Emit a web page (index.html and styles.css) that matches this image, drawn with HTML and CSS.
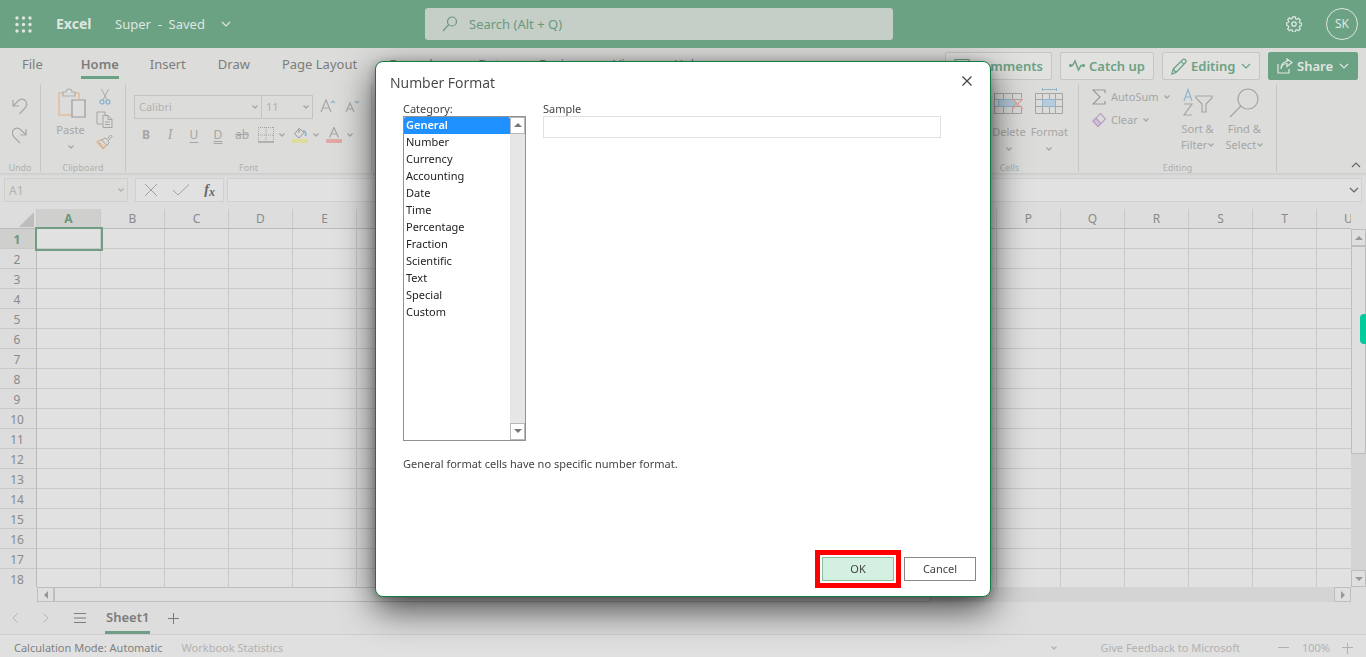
FILE: index.html
```html
<!DOCTYPE html>
<html lang="en">
<head>
<meta charset="utf-8">
<title>Super - Excel</title>
<link rel="stylesheet" href="styles.css">
</head>
<body>
<svg class="symbols" aria-hidden="true">
  <symbol id="chev" viewBox="0 0 10 6"><path d="M1 1l4 4 4-4" fill="none" stroke="currentColor" stroke-width="1.2"/></symbol>
  <symbol id="chev-s" viewBox="0 0 6 4"><path d="M.5.5L3 3 5.500.5" fill="none" stroke="currentColor" stroke-width="1.300"/></symbol>
  <symbol id="tri" viewBox="0 0 8 4"><path d="M4 0l4 4H0z" fill="currentColor"/></symbol>
</svg>

<header class="topbar">
  <button class="plain waffle" aria-label="App launcher">
    <svg width="17" height="17" viewBox="0 0 17 17" fill="currentColor"><circle cx="2" cy="2" r="1.700"/><circle cx="8.500" cy="2" r="1.700"/><circle cx="15" cy="2" r="1.700"/><circle cx="2" cy="8.500" r="1.700"/><circle cx="8.500" cy="8.500" r="1.700"/><circle cx="15" cy="8.500" r="1.700"/><circle cx="2" cy="15" r="1.700"/><circle cx="8.500" cy="15" r="1.700"/><circle cx="15" cy="15" r="1.700"/></svg>
  </button>
  <div class="brand">Excel</div>
  <button class="plain doc"><span>Super&nbsp; -&nbsp; Saved</span><svg width="10" height="6"><use href="#chev"/></svg></button>
  <label class="search">
    <svg width="16" height="16" viewBox="0 0 16 16" fill="none" stroke="currentColor" stroke-width="1.200"><circle cx="10" cy="5.500" r="4.500"/><path d="M6.700 8.700L1 15"/></svg>
    <input type="text" placeholder="Search (Alt + Q)" aria-label="Search">
  </label>
  <button class="plain gear" aria-label="Settings">
    <svg width="16" height="16" viewBox="0 0 18 18" fill="none" stroke="currentColor" stroke-width="1.400"><path d="M7.500 1h3l.4 2.100 1.400.6 1.800-1.200 2 2-1.200 1.800.6 1.400 2 .4v2.800l-2 .4-.6 1.400 1.200 1.800-2 2-1.800-1.200-1.400.6-.4 2.100h-3l-.4-2.100-1.400-.6-1.800 1.200-2-2 1.200-1.800-.6-1.400L.8 10.400V7.600l1.700-.3.600-1.400-1.200-1.800 2-2 1.800 1.200 1.400-.6z"/><circle cx="9" cy="9" r="2.500"/></svg>
  </button>
  <button class="plain avatar">SK</button>
</header>

<nav class="tabs">
  <button class="plain tab file">File</button>
  <button class="plain tab active">Home</button>
  <button class="plain tab">Insert</button>
  <button class="plain tab">Draw</button>
  <button class="plain tab">Page Layout</button>
  <button class="plain tab">Formulas</button>
  <button class="plain tab">Data</button>
  <button class="plain tab">Review</button>
  <button class="plain tab">View</button>
  <button class="plain tab">Help</button>
  <div class="actions">
    <button class="action comments"><svg width="16" height="16" viewBox="0 0 16 16" fill="none" stroke="currentColor" stroke-width="1.200"><path d="M1 1.500h14v10H7l-3 3v-3H1z"/></svg>Comments</button>
    <button class="action catch"><svg width="16" height="14" viewBox="0 0 16 14" fill="none" stroke="currentColor" stroke-width="1.500"><path d="M1.500 6.500h2L6 2l3.500 9L12 6.500h2.500"/><circle cx="1.500" cy="6.500" r=".8"/><circle cx="14.500" cy="6.500" r=".8"/></svg>Catch up</button>
    <button class="action edit"><svg width="16" height="17" viewBox="0 0 16 17" fill="none" stroke="currentColor" stroke-width="1.300"><path d="M1 16l1.200-4.800L11.500 1.900c1-1 2-1 2.900-.1s.9 1.900-.1 2.900L5 14.500zM10 3.400l3 3M2.200 11.200L5 14.500"/></svg>Editing<svg class="more" width="10" height="6"><use href="#chev"/></svg></button>
    <button class="action share"><svg width="16" height="16" viewBox="0 0 16 16" fill="none" stroke="currentColor" stroke-width="1.200"><path d="M1 6v9h11v-4M4 11c.5-4 3-5.500 6-5.500v3L15 4.500 10 1v2.500C6.500 4 4 6.500 4 11z"/></svg>Share<svg class="more" width="10" height="6"><use href="#chev"/></svg></button>
  </div>
</nav>

<section class="ribbon">
  <div class="group undo">
    <div class="tools column">
      <button class="plain" aria-label="Undo"><svg width="16" height="18" viewBox="0 0 16 18" fill="none" stroke="currentColor" stroke-width="1.200"><path d="M1 2v6h6M1 8l5-5c3-3 6.500-2 8 .5 1 2 .8 4.500-1 6.500L7.500 16"/></svg></button>
      <button class="plain" aria-label="Redo"><svg width="16" height="18" viewBox="0 0 16 18" fill="none" stroke="currentColor" stroke-width="1.200"><path d="M14 2v6H8M14 8L9 3C6 0 2.500 1 1 3.500 0 5.500.2 8 2 10l6 6"/></svg></button>
    </div>
    <div class="caption">Undo</div>
  </div>
  <div class="group clipboard">
    <div class="tools">
      <button class="plain big">
        <svg width="28" height="32" viewBox="0 0 28 32" fill="none" stroke-width="1.200"><path d="M5 5H1v22h12M17 5h4v6" stroke="#dfbd9c" stroke-width="1.500"/><path d="M5 8V4h3c0-4 6-4 6 0h3v4z" stroke="#b0b0b0"/><path d="M14 12h13v17H14z" stroke="#999" fill="#dedede"/></svg>
        <span>Paste</span><svg width="6" height="4"><use href="#chev-s"/></svg>
      </button>
      <div class="column clips">
        <button class="plain" aria-label="Cut"><svg width="12" height="17" viewBox="0 0 12 17" fill="none" stroke="#aaa"><path d="M2.500 1l5.500 11M9.500 1L4 12"/><g stroke="#91b5cc" stroke-width="1.300"><circle cx="3" cy="14" r="2"/><circle cx="9" cy="14" r="2"/></g></svg></button>
        <button class="plain" aria-label="Copy"><svg width="17" height="17" viewBox="0 0 17 17" fill="none" stroke="#a5a5a5"><path d="M6 13H1V1h8v3M7 4.500h5l4 4v8H7zM12 4.500v4h4M9 11h5M9 13.500h5"/></svg></button>
        <button class="plain" aria-label="Format painter"><svg width="17" height="16" viewBox="0 0 17 16" fill="none" stroke="#a5a5a5"><path d="M6 6l3-2 2 1.500L14.500 1l1.500 1.500L12 7l1 2-2 2.500-6-6z"/><path d="M5 6L1 8l6 6.500 3.500-3.500M3 9l2 1M6 11l1 1" stroke="#d9b08a" stroke-width="1.300"/></svg></button>
      </div>
    </div>
    <div class="caption">Clipboard</div>
  </div>
  <div class="group font">
    <div class="tools column">
      <div class="row combos">
        <span class="combo name"><select aria-label="Font"><option>Calibri</option></select><svg width="6" height="4"><use href="#chev-s"/></svg></span>
        <span class="combo size"><select aria-label="Font size"><option>11</option></select><svg width="6" height="4"><use href="#chev-s"/></svg></span>
        <button class="plain grow" aria-label="Grow font"><svg width="16" height="16" viewBox="0 0 16 16" fill="none" stroke="currentColor" stroke-width="1.200"><path d="M1 13L6 1l5 12M3 9h6"/><path d="M11 4l2-2 2 2" stroke="#91b5cc"/></svg></button>
        <button class="plain shrink" aria-label="Shrink font"><svg width="16" height="16" viewBox="0 0 16 16" fill="none" stroke="currentColor" stroke-width="1.200"><path d="M1 13L5 4l4 9M3 10h4"/><path d="M10 2l2 2 2-2" stroke="#91b5cc"/></svg></button>
      </div>
      <div class="row styles">
        <button class="plain b">B</button><button class="plain i">I</button><button class="plain u">U</button><button class="plain d">D</button><button class="plain s">ab</button>
        <button class="plain split" aria-label="Borders"><svg width="16" height="16" viewBox="0 0 16 16" fill="none" stroke="#a5a5a5"><path d="M.5 0v15M15.500 0v15M8 0v15M0 .5h16M0 8h16" stroke-dasharray="1 1"/><path d="M0 15h16" stroke-width="1.500"/></svg><svg width="6" height="4"><use href="#chev-s"/></svg></button>
        <button class="plain split" aria-label="Fill color"><svg width="16" height="16" viewBox="0 0 16 16" fill="none" stroke="#999"><path d="M7 1.500L2.500 7l4.500 4 5-5.500zM7 1.500V6"/><path d="M11 4c3 0 3 3 2.500 5" stroke="#91b5cc" stroke-width="1.800"/><path d="M0 14h16" stroke="#dfdb9b" stroke-width="4"/></svg><svg width="6" height="4"><use href="#chev-s"/></svg></button>
        <button class="plain split" aria-label="Font color"><svg width="16" height="16" viewBox="0 0 16 16" fill="none" stroke="#a5a5a5" stroke-width="1.200"><path d="M3.500 10.500l4.500-10 4.500 10M5 7h6"/><path d="M0 14h16" stroke="#e2a7a7" stroke-width="4"/></svg><svg width="6" height="4"><use href="#chev-s"/></svg></button>
      </div>
    </div>
    <div class="caption">Font</div>
  </div>
  <div class="between"></div>
  <div class="group cells">
    <div class="tools">
      <button class="plain big"><svg width="29" height="27" viewBox="0 0 29 27" fill="none" stroke="#a5a5a5"><path d="M0 5.500h28M0 11.500h28M0 18.500h28M0 25.500h28M.5 5v20M9.500 5v7M18.500 5v7M27.500 5v5M9.500 18v7M18.500 18v7M27.500 20v5"/><path d="M4.500 11.500h14l4 3.500-4 3.500h-14z" fill="#b6cbdb" stroke="#91b5cc"/><path d="M18 11l11 10M29 11L18 21" stroke="#e0a49c" stroke-width="1.200"/></svg><span>Delete</span><svg width="6" height="4"><use href="#chev-s"/></svg></button>
      <button class="plain big"><svg width="29" height="27" viewBox="0 0 29 27" fill="none" stroke="#a5a5a5"><path d="M.5 5.500h27v20H.5zM0 11.500h28M0 18.500h28M7.500 5v20M20.500 5v20M14.500 5v20"/><path d="M7.500 11.500h13v7h-13z" fill="#b6cbdb" stroke="#91b5cc"/><path d="M7 1.500h15M7.500 0v3M21.500 0v3" stroke="#91b5cc"/></svg><span>Format</span><svg width="6" height="4"><use href="#chev-s"/></svg></button>
    </div>
    <div class="caption">Cells</div>
  </div>
  <div class="group editing">
    <div class="tools">
      <div class="column sums">
        <button class="plain split"><svg width="14" height="16" viewBox="0 0 14 16" fill="none" stroke="#999" stroke-width="1.200"><path d="M13 4V1H1l7 7-7 7h12v-3"/></svg><span>AutoSum</span><svg width="6" height="4"><use href="#chev-s"/></svg></button>
        <button class="plain split"><svg width="14" height="16" viewBox="0 0 14 16" fill="none" stroke="#bb9fc3" stroke-width="1.200"><path d="M8.500 1.500L13.500 7 6 14.500 1 9z"/><path d="M4 6l5 5.500-3 3L1 9z" fill="#d2bed7"/></svg><span>Clear</span><svg width="6" height="4"><use href="#chev-s"/></svg></button>
      </div>
      <button class="plain big two"><svg width="30" height="30" viewBox="0 0 30 30" fill="none" stroke="#a5a5a5" stroke-width="1.200"><path d="M1 13L5 1.500 9 13M2.500 9h5" stroke="#91b5cc"/><path d="M1 16h8L1 27h8M13 8h16v2l-6 6v8h-4v-8l-6-6z"/></svg><span>Sort &amp;</span><span>Filter <svg width="6" height="4"><use href="#chev-s"/></svg></span></button>
      <button class="plain big two"><svg width="30" height="30" viewBox="0 0 30 30" fill="none" stroke="#a5a5a5" stroke-width="1.200"><circle cx="19" cy="11" r="10"/><path d="M12 18L1 29"/></svg><span>Find &amp;</span><span>Select <svg width="6" height="4"><use href="#chev-s"/></svg></span></button>
    </div>
    <div class="caption">Editing</div>
  </div>
  <div class="collapse"><button class="plain" aria-label="Collapse ribbon"><svg class="flip" width="10" height="6"><use href="#chev"/></svg></button></div>
</section>

<section class="formula">
  <span class="combo cellname"><input type="text" value="A1" aria-label="Name box"><svg width="6" height="4"><use href="#chev-s"/></svg></span>
  <div class="checks">
    <button class="plain" aria-label="Cancel entry"><svg width="12" height="12" viewBox="0 0 12 12" stroke="#a0a0a0"><path d="M0 0l12 12M12 0L0 12"/></svg></button>
    <button class="plain" aria-label="Enter"><svg width="16" height="12" viewBox="0 0 16 12" fill="none" stroke="#a0a0a0"><path d="M0 6l5 5L16 .5"/></svg></button>
    <button class="plain fx" aria-label="Insert function">f<small>x</small></button>
  </div>
  <div class="entry"><input type="text" aria-label="Formula bar"><svg width="10" height="6"><use href="#chev"/></svg></div>
</section>

<main class="sheet">
  <div class="gridwrap"><table class="grid" id="grid"></table></div>
  <div class="vscroll">
    <button class="arrow" aria-label="Scroll up"><svg width="8" height="4"><use href="#tri"/></svg></button>
    <div class="thumb"></div><div class="track"></div>
    <button class="arrow" aria-label="Scroll down"><svg class="flip" width="8" height="4"><use href="#tri"/></svg></button>
  </div>
</main>
<div class="hscroll">
  <button class="arrow" aria-label="Scroll left"><svg width="4" height="8" viewBox="0 0 4 8"><path d="M4 0v8L0 4z" fill="currentColor"/></svg></button>
  <div class="thumb"></div><div class="track"></div>
  <button class="arrow" aria-label="Scroll right"><svg width="4" height="8" viewBox="0 0 4 8"><path d="M0 0v8l4-4z" fill="currentColor"/></svg></button>
</div>

<nav class="sheets">
  <button class="plain dim" aria-label="Previous sheet"><svg width="6" height="10" viewBox="0 0 6 10" fill="none" stroke="currentColor"><path d="M5.500.5L1 5l4.500 4.500"/></svg></button>
  <button class="plain dim" aria-label="Next sheet"><svg width="6" height="10" viewBox="0 0 6 10" fill="none" stroke="currentColor"><path d="M.5.5L5 5 .5 9.500"/></svg></button>
  <button class="plain" aria-label="All sheets"><svg width="12" height="10" viewBox="0 0 12 10" stroke="currentColor"><path d="M0 .5h12M0 5h12M0 9.500h12"/></svg></button>
  <button class="plain current">Sheet1</button>
  <button class="plain" aria-label="New sheet"><svg width="11" height="11" viewBox="0 0 11 11" stroke="currentColor"><path d="M5.500 0v11M0 5.500h11"/></svg></button>
</nav>
<footer class="status">
  <span class="mode">Calculation Mode: Automatic</span>
  <span>Workbook Statistics</span>
  <svg class="right" width="6" height="4"><use href="#chev-s"/></svg>
  <a href="#" class="feedback">Give Feedback to Microsoft</a>
  <button class="plain" aria-label="Zoom out"><svg width="11" height="11" viewBox="0 0 11 11" stroke="currentColor"><path d="M0 4.500h11"/></svg></button>
  <span class="zoom">100%</span>
  <button class="plain" aria-label="Zoom in"><svg width="11" height="11" viewBox="0 0 11 11" stroke="currentColor"><path d="M5.500 0v11M0 4.500h11"/></svg></button>
</footer>
<div class="sidetab"></div>

<div class="overlay">
  <form class="dialog" role="dialog" aria-labelledby="title">
    <div class="titlebar"><h1 id="title">Number Format</h1><button type="button" class="plain" aria-label="Close"><svg width="10" height="10" viewBox="0 0 10 10" stroke="#444" stroke-width="1.200"><path d="M.5.5l9 9M9.500.5l-9 9"/></svg></button></div>
    <div class="fields">
      <div class="category">
        <label for="cat">Category:</label>
        <div class="listbox">
          <select id="cat" size="12">
            <option selected>General</option><option>Number</option><option>Currency</option><option>Accounting</option><option>Date</option><option>Time</option><option>Percentage</option><option>Fraction</option><option>Scientific</option><option>Text</option><option>Special</option><option>Custom</option>
          </select>
          <div class="listscroll">
            <span><svg width="8" height="4"><use href="#tri"/></svg></span>
            <span><svg class="flip" width="8" height="4"><use href="#tri"/></svg></span>
          </div>
        </div>
      </div>
      <div class="sample"><label for="sample">Sample</label><input id="sample" type="text" readonly></div>
    </div>
    <p class="note">General format cells have no specific number format.</p>
    <div class="buttons"><span class="highlight"><button type="button" class="ok">OK</button></span><button type="button" class="cancel">Cancel</button></div>
  </form>
</div>
<script src="script.js"></script>
</body>
</html>
```
FILE: styles.css
```css
* { box-sizing: border-box; }
body { margin: 0; height: 100vh; display: flex; flex-direction: column; overflow: hidden; background: #dddddd; color: #7c7c7c; font: 13px/18px "Noto Sans", "Open Sans", sans-serif; }
button, input, select { font: inherit; color: inherit; }
svg { display: block; flex: none; }
.symbols { position: absolute; width: 0; height: 0; }
.plain { border: 0; padding: 0; background: none; display: flex; align-items: center; justify-content: center; }
.flip { transform: rotate(180deg); }
.row { display: flex; align-items: center; }
.column { display: flex; flex-direction: column; }

.topbar { height: 48px; flex: none; display: flex; align-items: center; padding: 0 8px 0 15px; background: #6ba283; color: #dfe6e1; position: relative; z-index: 3; }
.brand { margin-left: 24px; font-size: 14px; font-weight: 700; width: 40px; }
.doc { margin-left: 19px; gap: 16px; }
.search { position: absolute; left: 50%; margin-left: -258px; width: 468px; height: 32px; border-radius: 3px; background: #c5cfc8; color: #6a987d; display: flex; align-items: center; padding-left: 17px; gap: 11px; }
.search input { flex: 1; border: 0; background: none; outline: 0; padding: 0; }
.search input::placeholder { color: inherit; opacity: 1; }
.gear { margin-left: auto; }
.avatar { width: 32px; height: 32px; margin-left: 24px; border: 1px solid #dfe6e1; border-radius: 50%; font-size: 12px; }

.tabs { height: 36px; flex: none; display: flex; gap: 32px; padding: 3px 8px 0 22px; background: #dcdcda; position: relative; }
.tab { height: 28px; border-bottom: 3px solid transparent; white-space: nowrap; }
.file { margin-right: 6px; }
.tab.active { border-color: #6ba283; font-weight: 600; margin-right: -1px; }
.actions { margin-left: auto; display: flex; gap: 8px; align-items: flex-start; padding-top: 1px; }
.action { height: 28px; display: flex; align-items: center; gap: 4px; padding: 0 8px; border: 1px solid #c6c6c4; border-radius: 2px; background: #e1e1e0; color: #6ba283; font-weight: 600; white-space: nowrap; }
.action .more { margin-left: 2px; }
.comments { width: 107px; }
.catch { width: 94px; }
.edit { width: 98px; }
.share { width: 90px; background: #6ba283; border-color: #6ba283; color: #e1e6e2; }

.ribbon { height: 90px; flex: none; display: flex; background: #dcdcda; color: #a6a6a6; border-bottom: 1px solid #cfcfcd; box-shadow: 0 1px 2px #cfcfcf; font-size: 11px; line-height: 16px; }
.group { height: 88px; border-right: 1px solid #c6c6c4; display: flex; flex-direction: column; justify-content: space-between; }
.caption { text-align: center; font-size: 9px; line-height: 9px; height: 9px; color: #b0b0ae; }
.tools { display: flex; }
.undo { width: 41px; }
.undo .tools { align-items: center; padding-top: 14px; gap: 11px; color: #a8a8a8; }
.clipboard { width: 85px; }
.clipboard .tools { padding: 4px 12px 0 14px; justify-content: space-between; }
.big { flex-direction: column; justify-content: flex-start; gap: 2px; white-space: nowrap; }
.big > svg:last-child { margin-top: 5px; }
.clipboard .big > svg:first-child { margin-left: 3px; }
.clips { align-items: center; gap: 6px; }
.font { width: 246px; }
.font .tools { padding: 11px 8px 0 8px; gap: 6px; }
.combo { position: relative; display: block; height: 24px; }
.combo select, .combo input { width: 100%; height: 100%; appearance: none; border: 1px solid #c4c4c2; border-radius: 0; background: transparent; padding: 0 4px; opacity: 1; color: #b2b2b0; }
.combo > svg { position: absolute; right: 4px; top: 10px; }
.name { width: 128px; }
.size { width: 52px; margin-left: -1px; }
.grow { margin-left: 7px; }
.shrink { margin-left: 9px; }
.styles { gap: 8px; padding-left: 4px; height: 20px; font-size: 12px; }
.styles > button { min-width: 16px; height: 20px; }
.styles .split { width: 26px; gap: 5px; }
.styles .b { font-weight: 700; }
.styles .i { font-style: italic; font-family: "Liberation Serif", serif; font-size: 14px; }
.styles .u { text-decoration: underline; text-underline-offset: 3px; }
.styles .d { text-decoration: underline double; text-underline-offset: 2px; }
.styles .s { text-decoration: line-through; }
.between { flex: 1; }
.cells { width: 88px; }
.cells .tools { padding: 4px 10px 0 0; gap: 5px; justify-content: flex-end; }
.cells .big { gap: 9px; }
.cells .big > svg:last-child { margin-top: -2px; }
.cells .caption { padding-right: 50px; }
.editing { width: 198px; }
.editing .tools { padding: 4px 13px 0 13px; justify-content: space-between; }
.sums { gap: 7px; align-items: flex-start; padding-top: 1px; }
.sums .split { gap: 5px; }
.two { gap: 0; }
.two > span:nth-of-type(1) { margin-top: 3px; }
.two span svg { display: inline-block; vertical-align: 2px; margin-left: -2px; }
.collapse { width: 89px; display: flex; align-items: flex-end; justify-content: flex-end; padding: 0 5px 5px 0; color: #666666; }

.formula { height: 35px; flex: none; display: flex; gap: 7px; padding: 4px 4px 7px; }
.cellname { width: 124px; color: #b0b0b0; font-size: 12px; }
.cellname input { border-color: #cfcfcd; background: #dcdcda; }
.checks, .cellname, .entry { height: 24px; }
.checks { width: 89px; border: 1px solid #d0d0d0; background: #e1e1e1; display: flex; align-items: center; justify-content: space-between; padding: 0 8px 0 9px; }
.fx { color: #666666; font: italic 700 14px/18px "Liberation Serif", serif; }
.fx small { font-size: 12px; padding-top: 3px; }
.entry { flex: 1; margin-left: -4px; border: 1px solid #d0d0d0; background: #e1e1e1; display: flex; align-items: center; padding-right: 2px; color: #666666; }
.entry input { flex: 1; border: 0; background: none; }

.sheet { flex: 1; min-height: 0; display: flex; }
.gridwrap { flex: 1; min-width: 0; overflow: hidden; }
.grid { table-layout: fixed; width: 1381px; border-collapse: separate; border-spacing: 0; background: #e1e1e1; line-height: 16px; font-size: 12px; }
.grid th, .grid td { padding: 0; height: 20px; border-right: 1px solid #c9c9c9; border-bottom: 1px solid #c9c9c9; }
.grid th { font-weight: 400; background: #dddddd; color: #8a8a8a; }
.grid tbody th { border-right-color: #bababa; padding: 2px 2px 0 0; }
.grid thead th { border-bottom-color: #bababa; }
.grid .rowhead { width: 37px; }
.grid th.on { background: #cfcfcd; color: #6a987d; font-weight: 700; }
.grid td.on { outline: 2px solid #729c83; position: relative; }
.grid .corner svg { margin: 2px 2px 0 auto; }
.vscroll { width: 15px; margin-top: 20px; display: flex; flex-direction: column; background: #d4d4d4; }
.arrow { flex: none; padding: 0; display: flex; align-items: center; justify-content: center; border: 1px solid #bebebe; background: #dfdfdf; color: #989898; }
.vscroll .arrow { height: 17px; }
.thumb { border: 1px solid #bebebe; background: #dfdfdf; }
.vscroll .thumb { flex: 207; }
.vscroll .track { flex: 117; }
.hscroll { height: 15px; flex: none; margin: 0 15px 0 37px; display: flex; background: #d4d4d4; }
.hscroll .arrow { width: 17px; }
.hscroll .thumb { flex: 876; }
.hscroll .track { flex: 404; }

.sheets { height: 33px; flex: none; display: flex; align-items: stretch; padding-left: 12px; gap: 25px; border-bottom: 1px solid #cfcfcf; }
.sheets .dim { color: #b4b4b4; }
.sheets .current { height: 32px; margin: 0 -7px 0 -6px; border-bottom: 3px solid #729c83; font-weight: 600; padding: 1px 1px 0; }
.status { height: 22px; flex: none; display: flex; align-items: center; padding: 4px 13px 0 14px; background: #e0e0e0; color: #b2b2b2; font-size: 11px; }
.mode { color: #808080; margin-right: 19px; }
.status .right { margin-left: auto; }
.feedback { margin: 0 38px 0 43px; color: inherit; text-decoration: none; }
.zoom { margin: 0 12px 0 13px; }
.sidetab { position: fixed; right: 0; top: 314px; width: 6px; height: 30px; border-radius: 4px 0 0 4px; background: #00cb9b; }

.overlay { position: fixed; inset: 0; z-index: 2; display: flex; align-items: center; justify-content: center; }
.dialog { width: 616px; padding: 10px 14px 8px; border: 1px solid #107c41; border-radius: 8px; background: #ffffff; color: #444444; box-shadow: 0 12px 36px rgba(0, 0, 0, .7), 0 2px 10px rgba(0, 0, 0, .25); font-size: 11px; line-height: 16px; }
.titlebar { display: flex; justify-content: space-between; height: 29px; padding-right: 4px; }
.titlebar h1 { margin: 0; font: 400 14px/22px "Open Sans", "Noto Sans", sans-serif; }
.titlebar button { height: 18px; }
.fields { display: flex; gap: 17px; padding: 0 35px 0 13px; }
.fields label { display: block; line-height: 15px; }
.category { width: 123px; }
.listbox { display: flex; height: 325px; border: 1px solid #919191; }
.listbox select { flex: 1; min-width: 0; border: 0; padding: 0; outline: 0; overflow: hidden; background: #ffffff; color: #222222; }
.listbox option { height: 17px; min-height: 17px; line-height: 17px; padding: 0 2px; }
.listbox option:checked { background: #1e90ff; color: #ffffff; font-weight: 600; }
.listscroll { width: 15px; background: #e6e6e6; display: flex; flex-direction: column; justify-content: space-between; }
.listscroll span { height: 17px; border: 1px solid #b8b8b8; background: #ffffff; color: #777777; display: flex; align-items: center; justify-content: center; }
.sample { flex: 1; }
.sample input { display: block; width: 100%; height: 22px; border: 1px solid #e1e1e1; }
.note { margin: 15px 13px 78px; }
.buttons { display: flex; justify-content: flex-end; align-items: center; gap: 3px; }
.buttons button { width: 72px; height: 24px; padding: 0; border: 1px solid #888888; background: #ffffff; display: block; }
.highlight { border: 5px solid #ff0000; padding: 2px; display: block; }
.buttons .ok { background: #d3f0e0; border-color: #86bfa0; }
```
FILE: script.js
```js
const columns = "ABCDEFGHIJKLMNOPQRSTU".split("");
const head = columns.map((c, i) => `<th class="${i ? "" : "on"}">${c}</th>`).join("");
const corner = '<th class="rowhead corner"><svg width="15" height="15" viewBox="0 0 15 15"><path d="M15 0v15H0z" fill="#bdbdbd"/></svg></th>';
let rows = "";
for (let r = 1; r <= 18; r++) {
  const cells = columns.map((c, i) => `<td class="${r === 1 && i === 0 ? "on" : ""}"></td>`).join("");
  rows += `<tr><th class="${r === 1 ? "on" : ""}">${r}</th>${cells}</tr>`;
}
document.getElementById("grid").innerHTML = `<thead><tr>${corner}${head}</tr></thead><tbody>${rows}</tbody>`;
```
